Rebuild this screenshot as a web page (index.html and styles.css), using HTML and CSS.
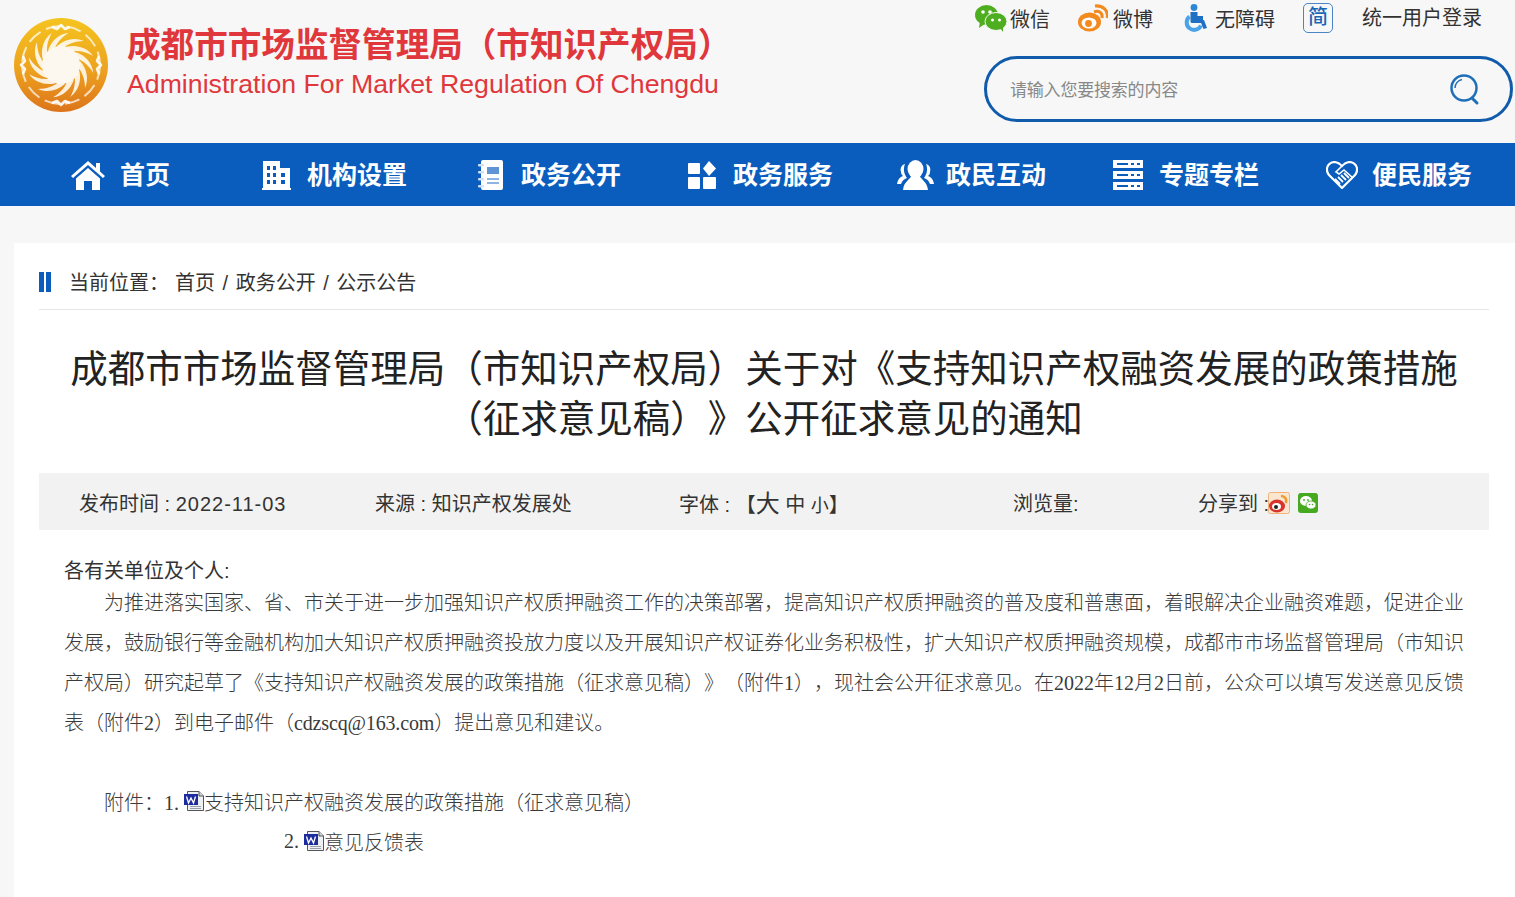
FILE: index.html
```html
<!DOCTYPE html>
<html lang="zh-CN">
<head>
  <meta charset="UTF-8" />
  <title>成都市市场监督管理局</title>
  <link rel="stylesheet" href="styles.css">
</head>
<body>

  <header class="site-head">
    <div class="brand">
      <svg class="logo" viewBox="0 0 94 94">
        <defs>
          <linearGradient id="sun" x1="0" y1="0" x2="0" y2="1">
            <stop offset="0" stop-color="#f5c41f"/>
            <stop offset="0.55" stop-color="#eda21f"/>
            <stop offset="1" stop-color="#dc741a"/>
          </linearGradient>
          <path id="blade" d="M43 28 C51 21 61 19 70 23 C61 23 53 26 47 32 Z" fill="#fff" opacity="0.85"/>
          <path id="knot" d="M38 9 L43 11 L47 7 L51 11 L56 9" fill="none" stroke="#fff" stroke-width="2.500" stroke-linejoin="round" opacity="0.9"/>
        </defs>
        <circle cx="47" cy="47" r="47" fill="url(#sun)"/>
        <circle cx="47" cy="47" r="39" fill="none" stroke="#fff" stroke-width="2" stroke-dasharray="15 6" opacity="0.7"/>
        <use href="#knot"/>
        <use href="#knot" transform="rotate(90 47 47)"/>
        <use href="#knot" transform="rotate(180 47 47)"/>
        <use href="#knot" transform="rotate(270 47 47)"/>
        <use href="#blade"/>
        <use href="#blade" transform="rotate(30 47 47)"/>
        <use href="#blade" transform="rotate(60 47 47)"/>
        <use href="#blade" transform="rotate(90 47 47)"/>
        <use href="#blade" transform="rotate(120 47 47)"/>
        <use href="#blade" transform="rotate(150 47 47)"/>
        <use href="#blade" transform="rotate(180 47 47)"/>
        <use href="#blade" transform="rotate(210 47 47)"/>
        <use href="#blade" transform="rotate(240 47 47)"/>
        <use href="#blade" transform="rotate(270 47 47)"/>
        <use href="#blade" transform="rotate(300 47 47)"/>
        <use href="#blade" transform="rotate(330 47 47)"/>
        <circle cx="47" cy="47" r="19" fill="#fdf8ef"/>
      </svg>
      <div class="brand-text">
        <div class="brand-cn">成都市市场监督管理局（市知识产权局）</div>
        <div class="brand-en">Administration For Market Regulation Of Chengdu</div>
      </div>
    </div>

    <div class="head-right">
      <div class="tools">
        <a class="tool tool-wechat">
          <svg width="32" height="28" viewBox="0 0 32 28">
            <ellipse cx="11.500" cy="11" rx="11.500" ry="10" fill="#4fae1f"/>
            <path d="M5 17 L4 24 L11 19 Z" fill="#4fae1f"/>
            <ellipse cx="21" cy="17.500" rx="11" ry="9" fill="#4fae1f" stroke="#f7f7f7" stroke-width="1"/>
            <path d="M25 24 L28 28 L28 22 Z" fill="#4fae1f"/>
            <circle cx="8" cy="8" r="1.800" fill="#fff"/>
            <circle cx="15" cy="8" r="1.800" fill="#fff"/>
            <circle cx="17.500" cy="16" r="1.500" fill="#fff"/>
            <circle cx="24.500" cy="16" r="1.500" fill="#fff"/>
          </svg>
          微信
        </a>
        <a class="tool tool-weibo">
          <svg width="30" height="28" viewBox="0 0 30 28">
            <ellipse cx="11.500" cy="18" rx="11.500" ry="9.500" fill="#f28a1e"/>
            <ellipse cx="11" cy="19" rx="7.500" ry="5.500" fill="#fff"/>
            <circle cx="10.500" cy="19.500" r="3.400" fill="#f28a1e"/>
            <path d="M16 8 C21 6 25 9 24 14" fill="none" stroke="#f28a1e" stroke-width="3"/>
            <path d="M17 2 C25 1 31 7 29 14" fill="none" stroke="#f28a1e" stroke-width="3"/>
          </svg>
          微博
        </a>
        <a class="tool tool-access">
          <svg width="24" height="28" viewBox="0 0 24 28">
            <circle cx="10" cy="3.500" r="3.400" fill="#2e86d6"/>
            <path d="M6.500 8 H13.500 V12 H19 V16 H20 L23 24 L19.500 25 L17 19 H8 C6.500 19 6.500 18 6.500 17 Z" fill="#1f6fc4"/>
            <path d="M5.500 12.500 A7.500 7.500 0 1 0 17 21.500" fill="none" stroke="#4aa3e8" stroke-width="4"/>
          </svg>
          无障碍
        </a>
        <a class="tool-lang">简</a>
        <a class="tool-login">统一用户登录</a>
      </div>
      <form class="search">
        <span class="search-hint">请输入您要搜索的内容</span>
        <svg class="search-icon" width="32" height="32" viewBox="0 0 32 32">
          <circle cx="15" cy="14" r="12.500" fill="none" stroke="#1f6fb8" stroke-width="2.500"/>
          <path d="M6 14 A9 9 0 0 1 13 5.500" fill="none" stroke="#1f6fb8" stroke-width="1.500"/>
          <path d="M23 24 L28 29" stroke="#1f6fb8" stroke-width="3" stroke-linecap="round"/>
        </svg>
      </form>
    </div>
  </header>

  <nav class="main-nav">
    <a class="nav-item nav-home">
      <svg width="34" height="30" viewBox="0 0 34 30">
        <path d="M17 1 L25 8 V3 H29 V11.500 L34 16 L32 18 L17 5 L2 18 L0 16 Z" fill="#fff"/>
        <path d="M17 8 L29 18.500 V30 H21 V21 H13 V30 H5 V18.500 Z" fill="#fff"/>
      </svg>
      <span class="nav-text">首页</span>
    </a>
    <a class="nav-item nav-org">
      <svg width="29" height="30" viewBox="0 0 29 30">
        <path fill-rule="evenodd" fill="#fff" d="M1 1 H18 V8 H28 V28 H29 V30 H0 V28 H1 Z M5 6 V10 H8 V6 Z M11 6 V10 H14 V6 Z M5 13 V17 H8 V13 Z M11 13 V17 H14 V13 Z M19 13 V17 H23 V13 Z M5 20 V24 H8 V20 Z M11 20 V24 H14 V20 Z M19 20 V24 H23 V20 Z"/>
      </svg>
      <span class="nav-text">机构设置</span>
    </a>
    <a class="nav-item nav-open">
      <svg width="25" height="30" viewBox="0 0 25 30">
        <rect x="3" y="0" width="22" height="30" rx="2" fill="#fff"/>
        <rect x="0" y="4" width="6" height="2.500" rx="1" fill="#cfe0f5"/>
        <rect x="0" y="11" width="6" height="2.500" rx="1" fill="#cfe0f5"/>
        <rect x="0" y="18" width="6" height="2.500" rx="1" fill="#cfe0f5"/>
        <rect x="0" y="25" width="6" height="2.500" rx="1" fill="#cfe0f5"/>
        <rect x="9" y="7" width="12" height="7" fill="#5f94d6"/>
        <rect x="9" y="18" width="12" height="2" fill="#8fb4e4"/>
        <rect x="9" y="22" width="12" height="2" fill="#8fb4e4"/>
      </svg>
      <span class="nav-text">政务公开</span>
    </a>
    <a class="nav-item nav-serve">
      <svg width="29" height="28" viewBox="0 0 29 28">
        <rect x="0" y="2" width="12" height="11" rx="1" fill="#fff"/>
        <path d="M21 0 L28 7.500 L21 15 L15 7.500 Z" fill="#fff"/>
        <rect x="0" y="16" width="12" height="12" rx="1" fill="#fff"/>
        <rect x="15" y="16" width="13" height="12" rx="1" fill="#fff"/>
      </svg>
      <span class="nav-text">政务服务</span>
    </a>
    <a class="nav-item nav-people">
      <svg width="37" height="30" viewBox="0 0 37 30">
        <ellipse cx="18.500" cy="9" rx="8" ry="9" fill="#fff"/>
        <path d="M14 16 H23 C24 20 30 21 31 30 H6 C7 21 13 20 14 16 Z" fill="#fff"/>
        <path d="M8 4 C4 5 3 9 4 12 C4 14 5 15 6 16 C3 17 1 19 0 24 H4 C5 21 7 19 10 18 C7 14 6 9 8 4 Z" fill="#fff"/>
        <path d="M29 4 C33 5 34 9 33 12 C33 14 32 15 31 16 C34 17 36 19 37 24 H33 C32 21 30 19 27 18 C30 14 31 9 29 4 Z" fill="#fff"/>
      </svg>
      <span class="nav-text">政民互动</span>
    </a>
    <a class="nav-item nav-topic">
      <svg width="30" height="30" viewBox="0 0 30 30">
        <path fill-rule="evenodd" fill="#fff" d="M0 0 H30 V8 H0 Z M4 3 V5 H15 V3 Z M18 3 V5 H21 V3 Z M24 3 V5 H27 V3 Z"/>
        <path fill-rule="evenodd" fill="#fff" d="M0 11 H30 V19 H0 Z M4 14 V16 H15 V14 Z M18 14 V16 H21 V14 Z M24 14 V16 H27 V14 Z"/>
        <path fill-rule="evenodd" fill="#fff" d="M0 22 H30 V30 H0 Z M4 25 V27 H15 V25 Z M18 25 V27 H21 V25 Z M24 25 V27 H27 V25 Z"/>
      </svg>
      <span class="nav-text">专题专栏</span>
    </a>
    <a class="nav-item nav-life">
      <svg width="32" height="28" viewBox="0 0 32 28">
        <path d="M16 27 L3 14 C-1 9 1 2 8 1 C11 1 14 3 16 5 C18 3 21 1 24 1 C31 2 33 9 29 14 Z" fill="none" stroke="#fff" stroke-width="2.200"/>
        <path d="M16 5 L10 11 L13 13 L18 9 L27 17" fill="none" stroke="#fff" stroke-width="1.600"/>
        <path d="M9 18 L14 23 M12 16 L17 21 M15 14 L20 19 M18 12 L23 17" stroke="#fff" stroke-width="1.800"/>
      </svg>
      <span class="nav-text">便民服务</span>
    </a>
  </nav>

  <main class="content">
    <div class="crumbs">
      <span class="crumb-mark"></span>
      <span class="crumb-label">当前位置：</span>
      <span class="crumb-path">首页 / 政务公开 / 公示公告</span>
    </div>

    <h1 class="art-title">成都市市场监督管理局（市知识产权局）关于对《支持知识产权融资发展的政策措施（征求意见稿）》公开征求意见的通知</h1>

    <div class="art-meta">
      <span class="meta-date">发布时间 : <span class="date-num">2022-11-03</span></span>
      <span class="meta-source">来源 : 知识产权发展处</span>
      <span class="meta-size">字体 : 【<b class="size-l">大</b> <b class="size-m">中</b> <b class="size-s">小</b>】</span>
      <span class="meta-views">浏览量:</span>
      <span class="meta-share">
        分享到 :
        <svg class="share-icon" width="22" height="22" viewBox="0 0 22 22">
          <rect x="0.500" y="0.500" width="21" height="21" rx="2" fill="#fbe6cf" stroke="#f2b27a"/>
          <ellipse cx="9" cy="14" rx="8" ry="6.500" fill="#d9342b"/>
          <ellipse cx="8.500" cy="14.500" rx="4.500" ry="3.500" fill="#fff"/>
          <circle cx="8" cy="15" r="2" fill="#222"/>
          <path d="M13 4 C17 4 19 7 18 11" fill="none" stroke="#ef9a2d" stroke-width="2.500"/>
        </svg>
        <svg class="share-icon" width="20" height="20" viewBox="0 0 20 20">
          <rect width="20" height="20" rx="3" fill="#46a91f"/>
          <ellipse cx="8" cy="8" rx="6" ry="5" fill="#fff"/>
          <ellipse cx="13" cy="12" rx="5" ry="4" fill="#fff" stroke="#46a91f" stroke-width="0.800"/>
          <circle cx="6" cy="7" r="0.900" fill="#46a91f"/>
          <circle cx="10" cy="7" r="0.900" fill="#46a91f"/>
          <circle cx="11.500" cy="11.500" r="0.800" fill="#46a91f"/>
          <circle cx="14.500" cy="11.500" r="0.800" fill="#46a91f"/>
        </svg>
      </span>
    </div>

    <div class="art-body">
      <p class="greet">各有关单位及个人:</p>
      <p class="para">为推进落实国家、省、市关于进一步加强知识产权质押融资工作的决策部署，提高知识产权质押融资的普及度和普惠面，着眼解决企业融资难题，促进企业发展，鼓励银行等金融机构加大知识产权质押融资投放力度以及开展知识产权证券化业务积极性，扩大知识产权质押融资规模，成都市市场监督管理局（市知识产权局）研究起草了《支持知识产权融资发展的政策措施（征求意见稿）》（附件1），现社会公开征求意见。在2022年12月2日前，公众可以填写发送意见反馈表（附件2）到电子邮件（<span class="mail">cdzscq@163.com</span>）提出意见和建议。</p>
      <p class="blank"></p>
      <p class="attach attach-first">附件：1.
        <svg class="doc" viewBox="0 0 20 20">
          <path d="M3.500 0.500 H15 L19.500 5 V19.500 H3.500 Z" fill="#eef0f4" stroke="#555"/>
          <path d="M15 0.500 V5 H19.500" fill="#d0d4dc" stroke="#555"/>
          <path d="M6 15.500 H17 M6 17.500 H17" stroke="#9aa0aa"/>
          <rect x="0" y="3" width="14" height="11" fill="#1c2c9c"/>
          <path d="M2.500 5.500 L4.500 12 L7 7 L9.500 12 L11.500 5.500" fill="none" stroke="#fff" stroke-width="1.300"/>
        </svg>
        支持知识产权融资发展的政策措施（征求意见稿）
      </p>
      <p class="attach attach-second">2.
        <svg class="doc" viewBox="0 0 20 20">
          <path d="M3.500 0.500 H15 L19.500 5 V19.500 H3.500 Z" fill="#eef0f4" stroke="#555"/>
          <path d="M15 0.500 V5 H19.500" fill="#d0d4dc" stroke="#555"/>
          <path d="M6 15.500 H17 M6 17.500 H17" stroke="#9aa0aa"/>
          <rect x="0" y="3" width="14" height="11" fill="#1c2c9c"/>
          <path d="M2.500 5.500 L4.500 12 L7 7 L9.500 12 L11.500 5.500" fill="none" stroke="#fff" stroke-width="1.300"/>
        </svg>
        意见反馈表
      </p>
    </div>
  </main>

</body>
</html>
```

FILE: styles.css
```css
body {
  margin: 0;
  font-family: "Liberation Sans", "Noto Sans CJK SC", sans-serif;
  background-color: #f7f7f7;
  color: #222;
  text-spacing-trim: space-all;
}

a {
  color: inherit;
  text-decoration: none;
}

.site-head {
  display: flex;
  justify-content: space-between;
  height: 143px;
  padding-left: 14px;
  padding-right: 2px;
}

.brand {
  display: flex;
  align-items: flex-start;
  padding-top: 18px;
}

.logo {
  width: 94px;
  height: 94px;
  flex-shrink: 0;
  filter: blur(0.4px);
}

.brand-text {
  margin-left: 19px;
  color: #e0373c;
}

.brand-cn {
  font-size: 33.600px;
  font-weight: 700;
  line-height: 44px;
  margin-top: 6px;
  white-space: nowrap;
}

.brand-en {
  font-size: 26.700px;
  line-height: 34px;
  margin-top: -1px;
  white-space: nowrap;
}

.head-right {
  width: 528px;
}

.tools {
  display: flex;
  align-items: center;
  height: 36px;
  font-size: 20px;
  margin-left: -10px;
  color: #333;
}

.tool {
  display: flex;
  align-items: center;
  gap: 3px;
}

.tool-weibo {
  margin-left: 28px;
  gap: 5px;
}

.tool-access {
  margin-left: 31px;
  gap: 7px;
}

.tool-lang {
  margin-left: 28px;
  width: 28px;
  height: 28px;
  border: 1.500px solid #4a86c5;
  border-radius: 5px;
  color: #1a66b5;
  text-align: center;
  line-height: 27px;
  font-weight: 500;
}

.tool-login {
  margin-left: 29px;
  margin-top: -3px;
}

.search {
  display: flex;
  justify-content: space-between;
  align-items: center;
  box-sizing: border-box;
  height: 66px;
  margin-top: 20px;
  margin-left: -1px;
  padding: 0 29px 0 23px;
  border: 3px solid #105cab;
  border-radius: 33px;
}

.search-hint {
  font-size: 17px;
  letter-spacing: -0.200px;
  color: #888;
  margin-bottom: 2px;
}

.search-icon {
  margin-top: 2px;
}

.main-nav {
  display: flex;
  align-items: center;
  height: 63px;
  background-color: #0a5dbd;
  color: #fff;
  font-size: 25px;
  font-weight: 700;
}

.nav-item {
  display: flex;
  align-items: center;
  white-space: nowrap;
}

.nav-text {
  margin-bottom: 4px;
}

.nav-home {
  margin-left: 71px;
  gap: 15px;
}

.nav-org {
  margin-left: 92px;
  gap: 16px;
}

.nav-open {
  margin-left: 71px;
  gap: 18px;
}

.nav-serve {
  margin-left: 67px;
  gap: 16px;
}

.nav-people {
  margin-left: 64px;
  gap: 12px;
}

.nav-topic {
  margin-left: 67px;
  gap: 16px;
}

.nav-life {
  margin-left: 67px;
  gap: 14px;
}

.content {
  box-sizing: border-box;
  min-height: calc(100vh - 243px);
  margin: 37px 0 0 14px;
  padding: 0 26px 0 25px;
  background-color: #fff;
}

.crumbs {
  display: flex;
  align-items: center;
  height: 55px;
  padding-top: 11px;
  border-bottom: 1px solid #e6e6e6;
  font-size: 20px;
  color: #333;
}

.crumb-mark {
  width: 2px;
  height: 20px;
  border-left: 5px solid #0a5dbd;
  border-right: 5px solid #0a5dbd;
  margin-right: 18px;
}

.crumb-label {
  margin-right: 6px;
}

.crumb-path {
  word-spacing: 2px;
}

.art-title {
  margin: 34px 0 0;
  font-size: 37.500px;
  font-weight: 400;
  line-height: 50px;
  text-align: center;
  color: #222;
}

.art-meta {
  display: flex;
  align-items: center;
  box-sizing: border-box;
  height: 57px;
  margin-top: 29px;
  padding: 2px 0 0 40px;
  background-color: #f2f2f2;
  font-size: 20px;
  color: #333;
}

.meta-date {
  width: 296px;
}

.date-num {
  letter-spacing: 1px;
}

.meta-source {
  width: 304px;
}

.meta-size {
  width: 334px;
  margin-bottom: 2px;
}

.size-l {
  font-size: 24px;
  font-weight: 400;
}

.size-m {
  font-weight: 400;
}

.size-s {
  font-size: 18px;
  font-weight: 400;
}

.meta-views {
  width: 185px;
}

.meta-share {
  display: flex;
  align-items: center;
  gap: 8px;
}

.meta-share .share-icon:first-of-type {
  margin-left: -9px;
}

.art-body {
  padding: 30px 25px 0;
  font-family: "Liberation Serif", "Noto Sans CJK SC", serif;
  font-size: 20px;
  font-weight: 300;
  color: #3a3a3a;
}

.art-body p {
  margin: 0;
}

.greet {
  font-family: "Liberation Sans", "Noto Sans CJK SC", sans-serif;
  font-weight: 400;
  line-height: 23px;
  color: #333;
}

.para {
  text-indent: 40px;
  line-height: 40px;
  text-align: justify;
}

.mail {
  letter-spacing: -0.150px;
}

.blank {
  height: 38px;
}

.attach {
  display: flex;
  align-items: center;
  height: 40px;
}

.attach-first {
  padding-left: 40px;
}

.attach-second {
  padding-left: 220px;
}

.doc {
  width: 20px;
  height: 20px;
  flex-shrink: 0;
  margin-left: 5px;
}
```
